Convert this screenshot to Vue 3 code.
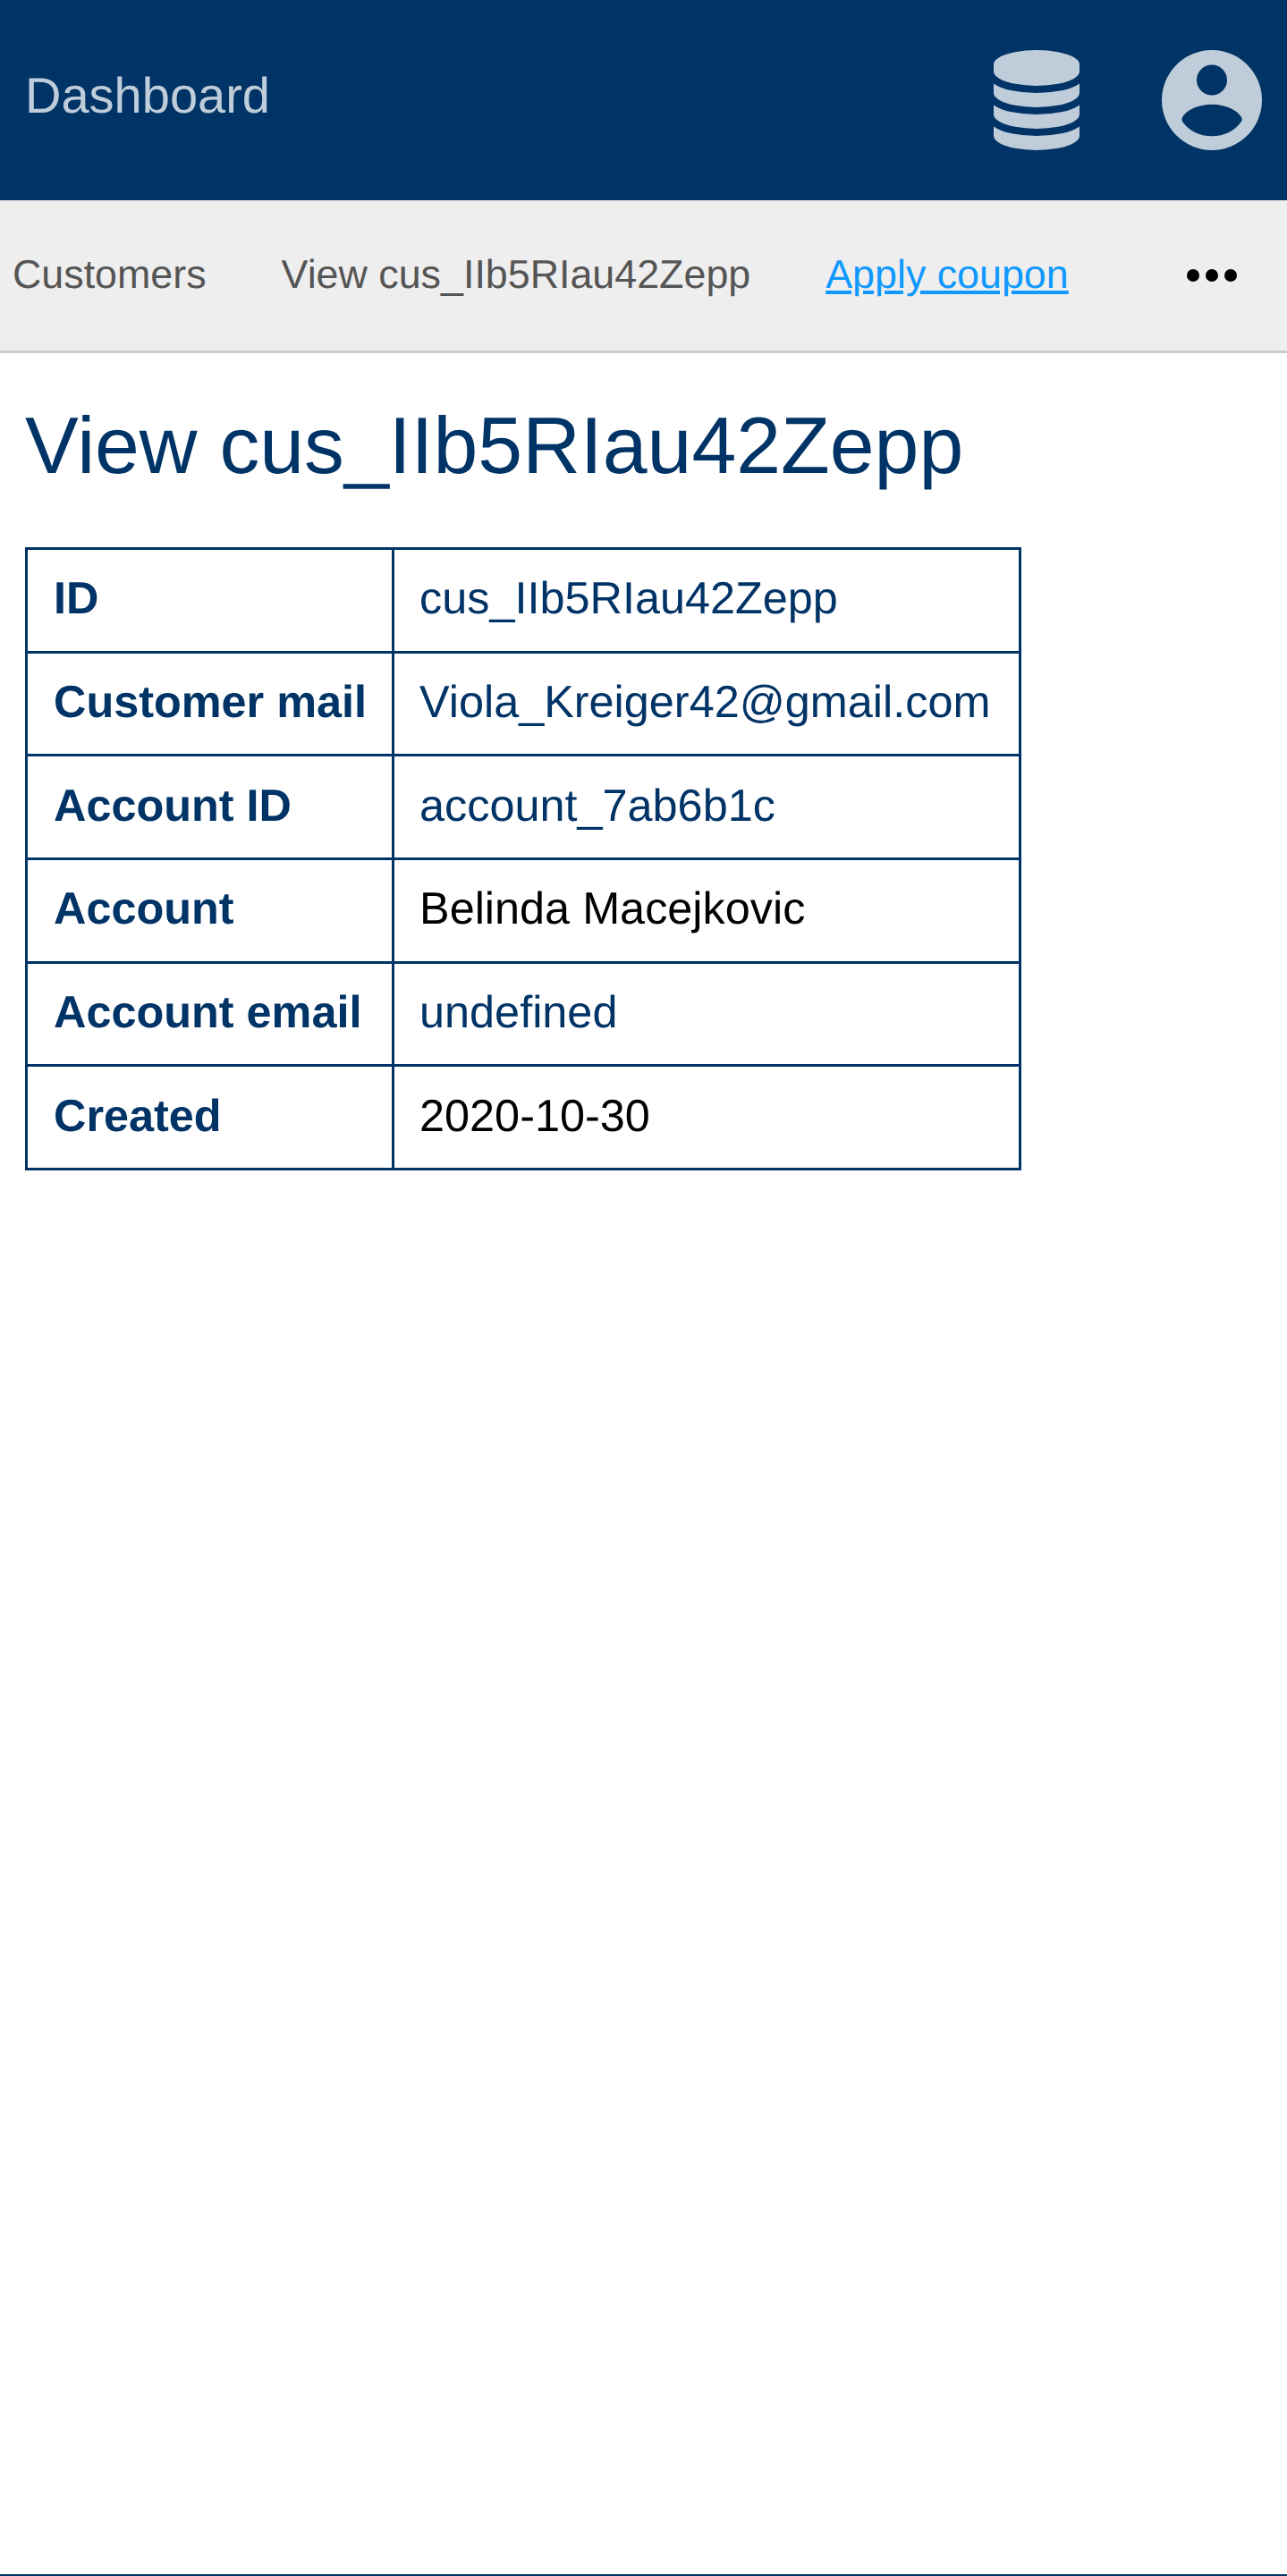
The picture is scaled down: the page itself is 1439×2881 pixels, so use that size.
<template>
  <div class="page">
    <header class="topbar">
      <a class="brand">Dashboard</a>
      <div class="top-icons">
        <svg class="db-icon" viewBox="128 0 1536 1792">
          <path d="M896 768q237 0 443-43t325-127v170q0 69-103 128t-280 93.500-385 34.500-385-34.500-280-93.500-103-128v-170q119 84 325 127t443 43zm0 768q237 0 443-43t325-127v170q0 69-103 128t-280 93.500-385 34.500-385-34.500-280-93.500-103-128v-170q119 84 325 127t443 43zm0-384q237 0 443-43t325-127v170q0 69-103 128t-280 93.500-385 34.500-385-34.500-280-93.500-103-128v-170q119 84 325 127t443 43zm0-1152q208 0 385 34.500t280 93.500 103 128v128q0 69-103 128t-280 93.500-385 34.500-385-34.500-280-93.500-103-128v-128q0-69 103-128t280-93.500 385-34.500z" />
        </svg>
        <svg class="user-icon" viewBox="0 0 112 112">
          <path fill-rule="evenodd" d="M56 0a56 56 0 1 0 0 112A56 56 0 0 0 56 0Zm0 16.500a17 17 0 1 1 0 34 17 17 0 0 1 0-34Zm0 44.200c15 0 29 6.300 33.500 15.300q.5 2.300-.5 4C82 90 70 96.300 56 96.300S30 90 23 80q-1-1.700-.5-4C27 67 41 60.700 56 60.700Z" />
        </svg>
      </div>
    </header>
    <nav class="subnav">
      <a class="nav-item">Customers</a>
      <a class="nav-item">View cus_IIb5RIau42Zepp</a>
      <a class="nav-item nav-link">Apply coupon</a>
      <span class="dots"><i /><i /><i /></span>
    </nav>
    <main class="content">
      <h1>View cus_IIb5RIau42Zepp</h1>
      <table>
        <tbody>
          <tr v-for="row in rows" :key="row.label">
            <th>{{ row.label }}</th>
            <td :class="{ plain: row.plain }">{{ row.value }}</td>
          </tr>
        </tbody>
      </table>
    </main>
  </div>
</template>

<script setup>
const rows = [
  { label: 'ID', value: 'cus_IIb5RIau42Zepp' },
  { label: 'Customer mail', value: 'Viola_Kreiger42@gmail.com' },
  { label: 'Account ID', value: 'account_7ab6b1c' },
  { label: 'Account', value: 'Belinda Macejkovic', plain: true },
  { label: 'Account email', value: 'undefined' },
  { label: 'Created', value: '2020-10-30', plain: true }
]
</script>

<style>
body {
  margin: 0;
}
</style>

<style scoped>
.page {
  box-sizing: border-box;
  min-height: 2881px;
  border-bottom: 2px solid #003366;
  font-family: "Liberation Sans", Arial, sans-serif;
  text-rendering: geometricPrecision;
  background: #fff;
}

.topbar {
  height: 224px;
  background: #003366;
  display: flex;
  align-items: center;
  justify-content: space-between;
  padding: 0 28px;
}

.brand {
  font-size: 56px;
  color: #bfccd9;
  margin-top: -12px;
}

.top-icons {
  display: flex;
  align-items: center;
  gap: 92px;
}

.db-icon {
  width: 96px;
  height: 112px;
  fill: #bfccd9;
}

.user-icon {
  width: 112px;
  height: 112px;
  fill: #bfccd9;
}

.subnav {
  height: 171px;
  box-sizing: border-box;
  background: #eeeeee;
  border-bottom: 3px solid #cccccc;
  display: flex;
  align-items: center;
  padding: 0 14px;
  gap: 84px;
  font-size: 44.800px;
  color: #555555;
}

.nav-item {
  margin-top: -1px;
}

.nav-link {
  color: #0f99ff;
  text-decoration: underline;
}

.dots {
  margin-left: auto;
  margin-right: 42px;
  display: flex;
  gap: 7px;
}

.dots i {
  width: 14px;
  height: 14px;
  border-radius: 50%;
  background: #000;
}

.content {
  padding: 0 28px;
}

h1 {
  margin: 52px 0 62px;
  font-size: 89.600px;
  font-weight: 400;
  line-height: 103px;
  color: #003366;
}

table {
  border-collapse: collapse;
  font-size: 50.400px;
  color: #003366;
}

th,
td {
  border: 3px solid #003366;
  height: 107.670px;
  text-align: left;
}

th {
  padding: 0 28px 5px 29px;
}

td {
  padding: 0 32px 5px 28px;
}

td.plain {
  color: #000;
}
</style>
